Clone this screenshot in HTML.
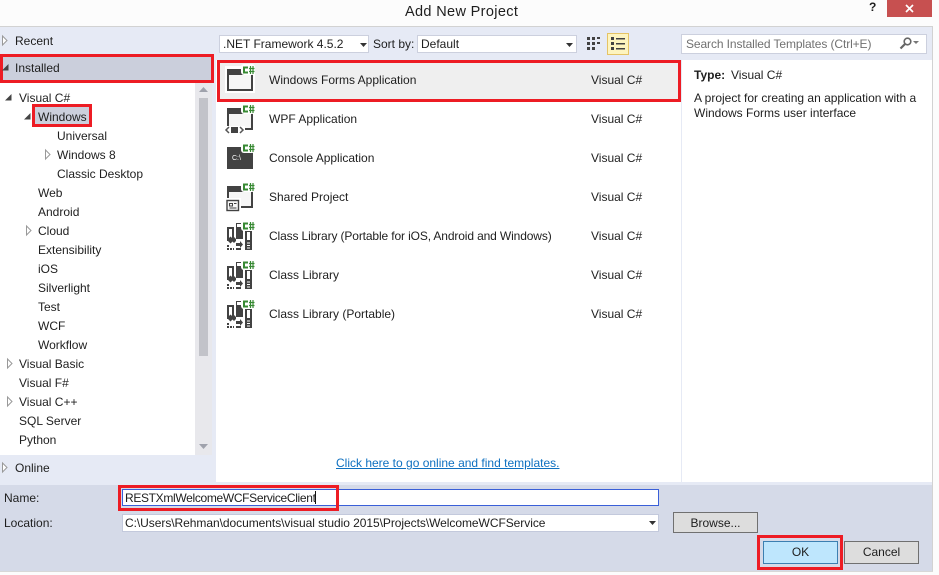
<!DOCTYPE html>
<html><head><meta charset="utf-8"><style>
html,body{margin:0;padding:0}
body{width:939px;height:575px;position:relative;overflow:hidden;background:#fcfcfc;font-family:"Liberation Sans",sans-serif;font-size:12px;color:#1e1e1e}
div,span.t{position:absolute;box-sizing:border-box}
.t{white-space:nowrap;line-height:16px;letter-spacing:0}
svg{position:absolute;overflow:visible}
.red{border:3px solid #ed1c24}
.btn{background:#ddd;border:1px solid #707070;text-align:center;line-height:20px}
</style></head><body>
<svg width="0" height="0"><defs>
<g id="cs"><rect x="14" y="0" width="14" height="11" rx="3" fill="#fff"/><path d="M21 3.500h-4v5h4" fill="none" stroke="#388a34" stroke-width="2"/><path d="M23.500 2v8M26 2v8M22 4.500h5.500M22 7.500h5.500" stroke="#388a34" stroke-width="1.200"/></g>
<g id="win"><path d="M0 5h26v22H0z" fill="#424242"/><rect x="2" y="11" width="22" height="14" fill="#f6f6f6"/></g>
<g id="lib"><path d="M1 8h5v12H1z" fill="#fff" stroke="#424242" stroke-width="2"/><path d="M9 3h7v27H9z" fill="#424242"/><rect x="10" y="4" width="5" height="3" fill="#fff"/><path d="M18 11h7v19h-7z" fill="#424242"/><rect x="20" y="12" width="3" height="8" fill="#fff"/><path d="M20 23h3M20 25.500h3M20 28h3" stroke="#fff"/><path d="M0 20l3.500-3.500L7 20l-3.500 3.500z" fill="#424242"/><path d="M4 20l3-3 3 3-3 3z" fill="#424242"/><rect x="9" y="19" width="7" height="11" fill="#fff"/><path d="M1 25v4h6" fill="none" stroke="#424242" stroke-width="2" stroke-dasharray="2 1"/><path d="M9 23h4v-2l3 3.500-3 3.500v-2H9z" fill="#424242"/><path d="M9 29h5" stroke="#424242" stroke-width="2"/></g>
<path id="arrF" d="M0 6.500L6.500 0v6.500z" fill="#444"/>
<path id="arrE" d="M.5 0l4.500 4.500L.5 9z" fill="#fff" stroke="#999"/>
</defs></svg>

<!-- title bar -->
<div style="left:0;top:26px;width:933px;height:1px;background:#d2d2d2"></div>
<span class="t" style="left:405px;top:3px;font-size:14.500px;letter-spacing:.35px;line-height:18px">Add New Project</span>
<span class="t" style="left:869px;top:-1px;font-weight:bold">?</span>
<div style="left:887px;top:0;width:45px;height:17px;background:#c75050"></div>
<svg style="left:905px;top:4px" width="9" height="9"><path d="M1 1l7 7M8 1l-7 7" stroke="#fff" stroke-width="1.700"/></svg>

<!-- main panels -->
<div style="left:0;top:27px;width:932px;height:458px;background:#e6eaf5"></div>
<div style="left:932px;top:26px;width:1px;height:545px;background:#d2d2d2"></div>
<div style="left:0;top:485px;width:932px;height:86px;background:#d5dae8"></div>
<div style="left:0;top:571px;width:933px;height:1px;background:#d8d8d8"></div>
<div style="left:216px;top:60px;width:716px;height:422px;background:#fff"></div>
<div style="left:681px;top:60px;width:1px;height:422px;background:#e6eaf5"></div>
<div style="left:216px;top:482px;width:716px;height:3px;background:#e6eaf5"></div>

<!-- left nav -->
<svg style="left:2px;top:36px" width="6" height="9"><use href="#arrE"/></svg>
<span class="t" style="left:15px;top:33px">Recent</span>
<div style="left:0;top:83px;width:195px;height:372px;background:#fff"></div>
<div style="left:195px;top:83px;width:17px;height:372px;background:#e8e8ec"></div>
<div style="left:199px;top:98px;width:9px;height:258px;background:#c2c3c9"></div>
<svg style="left:199px;top:87px" width="9" height="5"><path d="M0 5L4.500 0 9 5z" fill="#9fa2ac"/></svg>
<svg style="left:199px;top:444px" width="9" height="5"><path d="M0 0L4.500 5 9 0z" fill="#9fa2ac"/></svg>
<div class="red" style="left:0;top:54px;width:214px;height:29px;background:#cbcfdc"></div>
<svg style="left:2px;top:64px" width="6" height="6"><use href="#arrF"/></svg>
<span class="t" style="left:15px;top:60px">Installed</span>

<svg style="left:5px;top:94px" width="7" height="7"><use href="#arrF"/></svg>
<span class="t" style="left:19px;top:90px">Visual C#</span>
<div class="red" style="left:32px;top:104px;width:60px;height:23px;background:#cbcfdc"></div>
<svg style="left:24px;top:113px" width="7" height="7"><use href="#arrF"/></svg>
<span class="t" style="left:38px;top:109px">Windows</span>
<span class="t" style="left:57px;top:128px">Universal</span>
<svg style="left:45px;top:150px" width="6" height="9"><use href="#arrE"/></svg>
<span class="t" style="left:57px;top:147px">Windows 8</span>
<span class="t" style="left:57px;top:166px">Classic Desktop</span>
<span class="t" style="left:38px;top:185px">Web</span>
<span class="t" style="left:38px;top:204px">Android</span>
<svg style="left:26px;top:226px" width="6" height="9"><use href="#arrE"/></svg>
<span class="t" style="left:38px;top:223px">Cloud</span>
<span class="t" style="left:38px;top:242px">Extensibility</span>
<span class="t" style="left:38px;top:261px">iOS</span>
<span class="t" style="left:38px;top:280px">Silverlight</span>
<span class="t" style="left:38px;top:299px">Test</span>
<span class="t" style="left:38px;top:318px">WCF</span>
<span class="t" style="left:38px;top:337px">Workflow</span>
<svg style="left:7px;top:359px" width="6" height="9"><use href="#arrE"/></svg>
<span class="t" style="left:19px;top:356px">Visual Basic</span>
<span class="t" style="left:19px;top:375px">Visual F#</span>
<svg style="left:7px;top:397px" width="6" height="9"><use href="#arrE"/></svg>
<span class="t" style="left:19px;top:394px">Visual C++</span>
<span class="t" style="left:19px;top:413px">SQL Server</span>
<span class="t" style="left:19px;top:432px">Python</span>
<svg style="left:2px;top:463px" width="6" height="9"><use href="#arrE"/></svg>
<span class="t" style="left:15px;top:460px">Online</span>

<!-- toolbar -->
<div style="left:219px;top:35px;width:150px;height:18px;background:#fff;border:1px solid #ccd0de"></div>
<span class="t" style="left:223px;top:36px">.NET Framework 4.5.2</span>
<svg style="left:360px;top:43px" width="7" height="4"><path d="M0 0h7L3.500 4z" fill="#333"/></svg>
<span class="t" style="left:373px;top:36px">Sort by:</span>
<div style="left:417px;top:35px;width:160px;height:18px;background:#fff;border:1px solid #ccd0de"></div>
<span class="t" style="left:421px;top:36px">Default</span>
<svg style="left:566px;top:43px" width="7" height="4"><path d="M0 0h7L3.500 4z" fill="#333"/></svg>
<svg style="left:587px;top:37px" width="14" height="14"><path d="M0 0h3v3H0zM5 0h3v3H5zM10 0h3v2h-3zM0 5h3v3H0zM5 5h3v3H5zM10 5h3v2h-3zM0 10h3v3H0zM5 10h3v3H5z" fill="#424242"/></svg>
<div style="left:607px;top:33px;width:22px;height:22px;background:#fdf4bf;border:1px solid #e5c365"></div>
<svg style="left:611px;top:37px" width="14" height="14"><path d="M0 0h3v3H0zM0 5h3v3H0zM0 10h3v3H0zM5 1h9v1.500H5zM5 6h9v1.500H5zM5 11h9v1.500H5z" fill="#424242"/></svg>
<div style="left:681px;top:34px;width:246px;height:20px;background:#fff;border:1px solid #ccd0de"></div>
<span class="t" style="left:686px;top:36px;color:#717171;letter-spacing:-.1px">Search Installed Templates (Ctrl+E)</span>
<svg style="left:899px;top:37px" width="20" height="13"><circle cx="8.500" cy="4.500" r="3.300" fill="none" stroke="#666" stroke-width="1.600"/><path d="M6 7L1.500 11.500" stroke="#666" stroke-width="2.200"/><path d="M14 4h6l-3 3z" fill="#777"/></svg>

<!-- rows -->
<div class="red" style="left:217px;top:60px;width:464px;height:42px;background:#efefef"></div>
<div style="left:225px;top:66px;width:30px;height:27px;background:#fff"></div>
<svg style="left:227px;top:64px" width="32" height="32"><use href="#win"/><use href="#cs"/></svg>
<span class="t" style="left:269px;top:72px">Windows Forms Application</span><span class="t" style="left:591px;top:72px">Visual C#</span>

<svg style="left:227px;top:103px" width="32" height="32"><use href="#win"/><use href="#cs"/><rect x="-2" y="23" width="20" height="8" fill="#fff"/><rect x="4" y="24" width="7" height="6" fill="#424242"/><path d="M2 24l-3 3 3 3M13 24l3 3-3 3" fill="none" stroke="#555" stroke-width="1.500"/></svg>
<span class="t" style="left:269px;top:111px">WPF Application</span><span class="t" style="left:591px;top:111px">Visual C#</span>

<svg style="left:227px;top:142px" width="32" height="32"><path d="M0 5h26v22H0z" fill="#424242"/><use href="#cs"/><text x="5" y="18" font-size="7" fill="#fff" font-family="Liberation Sans">C:\</text></svg>
<span class="t" style="left:269px;top:150px">Console Application</span><span class="t" style="left:591px;top:150px">Visual C#</span>

<svg style="left:227px;top:181px" width="32" height="32"><use href="#win"/><use href="#cs"/><rect x="-2" y="17" width="16" height="15" fill="#fff"/><rect x="0" y="19.500" width="11.500" height="10" fill="#f6f6f6" stroke="#424242" stroke-width="1.400"/><path d="M2.500 22.500h3v2.500h-3zM7 22.500h2.500M2.500 27h7" stroke="#424242" fill="none"/></svg>
<span class="t" style="left:269px;top:189px">Shared Project</span><span class="t" style="left:591px;top:189px">Visual C#</span>

<svg style="left:227px;top:220px" width="32" height="32"><use href="#lib"/><use href="#cs"/></svg>
<span class="t" style="left:269px;top:228px;letter-spacing:-.13px">Class Library (Portable for iOS, Android and Windows)</span><span class="t" style="left:591px;top:228px">Visual C#</span>

<svg style="left:227px;top:259px" width="32" height="32"><use href="#lib"/><use href="#cs"/></svg>
<span class="t" style="left:269px;top:267px">Class Library</span><span class="t" style="left:591px;top:267px">Visual C#</span>

<svg style="left:227px;top:298px" width="32" height="32"><use href="#lib"/><use href="#cs"/></svg>
<span class="t" style="left:269px;top:306px">Class Library (Portable)</span><span class="t" style="left:591px;top:306px">Visual C#</span>

<span class="t" style="left:336px;top:455px;color:#0e70c0;text-decoration:underline">Click here to go online and find templates.</span>

<!-- details -->
<span class="t" style="left:694px;top:67px;font-weight:bold">Type:</span>
<span class="t" style="left:731px;top:67px">Visual C#</span>
<span class="t" style="left:694px;top:90px">A project for creating an application with a</span>
<span class="t" style="left:694px;top:105px">Windows Forms user interface</span>

<!-- bottom -->
<span class="t" style="left:4px;top:490px">Name:</span>
<span class="t" style="left:4px;top:515px">Location:</span>
<div style="left:122px;top:489px;width:537px;height:17px;background:#fff;border:1px solid #3a5fd8"></div>
<div class="red" style="left:118px;top:485px;width:221px;height:26px"></div>
<span class="t" style="left:125px;top:490px;letter-spacing:-.33px">RESTXmlWelcomeWCFServiceClient</span>
<div style="left:315px;top:491px;width:1px;height:13px;background:#111"></div>
<div style="left:122px;top:514px;width:537px;height:18px;background:#fff;border:1px solid #c3c9dc"></div>
<span class="t" style="left:125px;top:515px;letter-spacing:-.05px">C:\Users\Rehman\documents\visual studio 2015\Projects\WelcomeWCFService</span>
<svg style="left:649px;top:521px" width="7" height="4"><path d="M0 0h7L3.500 4z" fill="#333"/></svg>
<div class="btn" style="left:673px;top:512px;width:85px;height:21px">Browse...</div>
<div class="red" style="left:757px;top:535px;width:86px;height:35px"></div>
<div class="btn" style="left:763px;top:541px;width:75px;height:23px;background:#bee6fd;border-color:#3c7fb1">OK</div>
<div class="btn" style="left:844px;top:541px;width:75px;height:23px">Cancel</div>
</body></html>
